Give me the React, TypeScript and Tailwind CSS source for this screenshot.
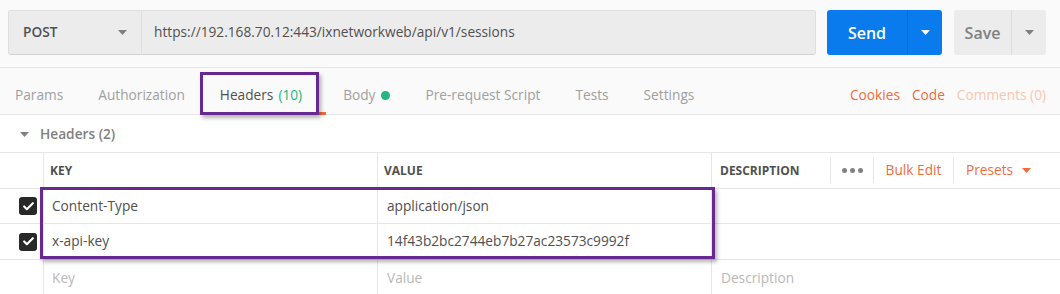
import { Check } from 'lucide-react';

function Caret({ color = '#808080' }: { color?: string }) {
    return (
        <svg width="9" height="5" viewBox="0 0 9 5" className="shrink-0">
            <path d="M0 0 L9 0 L4.5 5 Z" fill={color} />
        </svg>
    );
}

function Checkbox() {
    return (
        <div className="w-[18px] h-[18px] rounded-[3px] bg-[#282828] flex items-center justify-center">
            <Check className="w-[13px] h-[13px] text-white" strokeWidth={4} />
        </div>
    );
}

const tabs = ['Params', 'Authorization', 'Headers', 'Body', 'Pre-request Script', 'Tests', 'Settings'];

export default function App() {
    return (
        <div className="relative w-[1060px] h-[294px] overflow-hidden bg-white text-[13.7px] text-[#505050] font-['Open_Sans',sans-serif]">
            {/* Request bar */}
            <div className="h-[68px] bg-[#fafafa] border-b border-[#e6e6e6] flex items-start pt-[10px] pl-[8px]">
                <div className="w-[134px] h-[45px] bg-[#ececec] border border-[#dedede] border-b-[#d2d2d2] rounded-l-[3px] flex items-center pl-[14px] pr-[14px]">
                    <span className="font-semibold text-[#505050]">POST</span>
                    <span className="ml-auto"><Caret /></span>
                </div>
                <div className="w-[674px] h-[45px] bg-[#ececec] border border-l-0 border-[#dedede] border-b-[#d2d2d2] rounded-r-[3px] flex items-center pl-[12px]">
                    https://192.168.70.12:443/ixnetworkweb/api/v1/sessions
                </div>
                <div className="ml-[11px] h-[45px] flex rounded-[3px] bg-[#097bed] text-white">
                    <div className="w-[80px] flex items-center justify-center text-[16px] font-semibold">Send</div>
                    <div className="w-[35px] border-l border-[#0a6cd0] flex items-center justify-center">
                        <Caret color="#ffffff" />
                    </div>
                </div>
                <div className="ml-[12px] h-[45px] flex rounded-[3px] bg-[#ececec] text-[#808080]">
                    <div className="w-[57px] flex items-center justify-center text-[16px] font-semibold">Save</div>
                    <div className="w-[35px] border-l border-[#dcdcdc] flex items-center justify-center">
                        <Caret />
                    </div>
                </div>
            </div>

            {/* Tabs */}
            <div className="h-[47px] bg-[#fafafa] border-b border-[#e6e6e6] flex items-stretch pl-[15px] pr-[14px] text-[#a0a0a0]">
                {tabs.map((t) => (
                    <div key={t} className={`relative flex items-center pt-[8px] ${t === 'Headers' ? 'mr-[41px]' : 'mr-[35px]'}`}>
                        {t === 'Headers' ? (
                            <>
                                <span className="text-[#505050]">Headers</span>
                                <span className="ml-[5px] text-[#26b47f]">(10)</span>
                                <div className="absolute bottom-[-1px] left-[-19px] right-[-24px] h-[3px] bg-[#f26b3a]" />
                            </>
                        ) : t === 'Body' ? (
                            <>
                                <span>Body</span>
                                <span className="ml-[6px] w-[9px] h-[9px] rounded-full bg-[#26b47f]" />
                            </>
                        ) : (
                            <span>{t}</span>
                        )}
                    </div>
                ))}
                <div className="ml-auto flex items-center pt-[8px] gap-[12px] text-[#f26b3a]">
                    <span>Cookies</span>
                    <span>Code</span>
                    <span className="text-[#f9c6b1]">Comments (0)</span>
                </div>
            </div>

            {/* Section title */}
            <div className="h-[38px] border-b border-[#e6e6e6] flex items-center pl-[20px] pt-px">
                <Caret />
                <span className="ml-[11px] font-semibold text-[#808080]">Headers (2)</span>
            </div>

            {/* Table */}
            <div className="grid grid-cols-[43px_334px_334px_1fr] h-[36px] border-b border-[#e6e6e6] text-[12px] font-bold text-[#505050]">
                <div />
                <div className="border-l border-[#e6e6e6] flex items-center pl-[6px]">KEY</div>
                <div className="border-l border-[#e6e6e6] flex items-center pl-[6px]">VALUE</div>
                <div className="border-l border-[#e6e6e6] flex items-center">
                    <div className="w-[118px] pl-[8px]">DESCRIPTION</div>
                    <div className="w-px h-[25px] bg-[#e6e6e6]" />
                    <div className="w-[42px] flex items-center justify-center gap-[3px]">
                        <span className="w-[5px] h-[5px] rounded-full bg-[#808080]" />
                        <span className="w-[5px] h-[5px] rounded-full bg-[#808080]" />
                        <span className="w-[5px] h-[5px] rounded-full bg-[#808080]" />
                    </div>
                    <div className="w-px h-[25px] bg-[#e6e6e6]" />
                    <div className="w-[79px] text-center text-[13.7px] font-normal text-[#f26b3a]">Bulk Edit</div>
                    <div className="w-px h-[25px] bg-[#e6e6e6]" />
                    <div className="pl-[12px] flex items-center gap-[9px] text-[13.7px] font-normal text-[#f26b3a]">
                        <span>Presets</span>
                        <Caret color="#f26b3a" />
                    </div>
                </div>
            </div>

            {[
                ['Content-Type', 'application/json', 'h-[35px]'],
                ['x-api-key', '14f43b2bc2744eb7b27ac23573c9992f', 'h-[36px]'],
            ].map(([k, v, h]) => (
                <div key={k} className={`grid grid-cols-[43px_334px_334px_1fr] ${h} border-b border-[#e6e6e6]`}>
                    <div className="flex items-center justify-end pr-[6px]">
                        <Checkbox />
                    </div>
                    <div className="border-l border-[#e6e6e6] flex items-center pl-[8px]">{k}</div>
                    <div className="border-l border-[#e6e6e6] flex items-center pl-[9px]">{v}</div>
                    <div className="border-l border-[#e6e6e6]" />
                </div>
            ))}

            <div className="grid grid-cols-[43px_334px_334px_1fr] h-[36px] text-[#b8b8b8]">
                <div />
                <div className="border-l border-[#e6e6e6] flex items-center pl-[8px]">Key</div>
                <div className="border-l border-[#e6e6e6] flex items-center pl-[9px]">Value</div>
                <div className="border-l border-[#e6e6e6] flex items-center pl-[9px]">Description</div>
            </div>

            {/* Annotation boxes */}
            <div className="absolute left-[200px] top-[72px] w-[119px] h-[43px] border-[3px] border-[#67288f] shadow-[2px_3px_4px_rgba(0,0,0,0.3)]" />
            <div className="absolute left-[40px] top-[187px] w-[675px] h-[72px] border-[3px] border-[#67288f] shadow-[2px_3px_4px_rgba(0,0,0,0.3)]" />
        </div>
    );
}
